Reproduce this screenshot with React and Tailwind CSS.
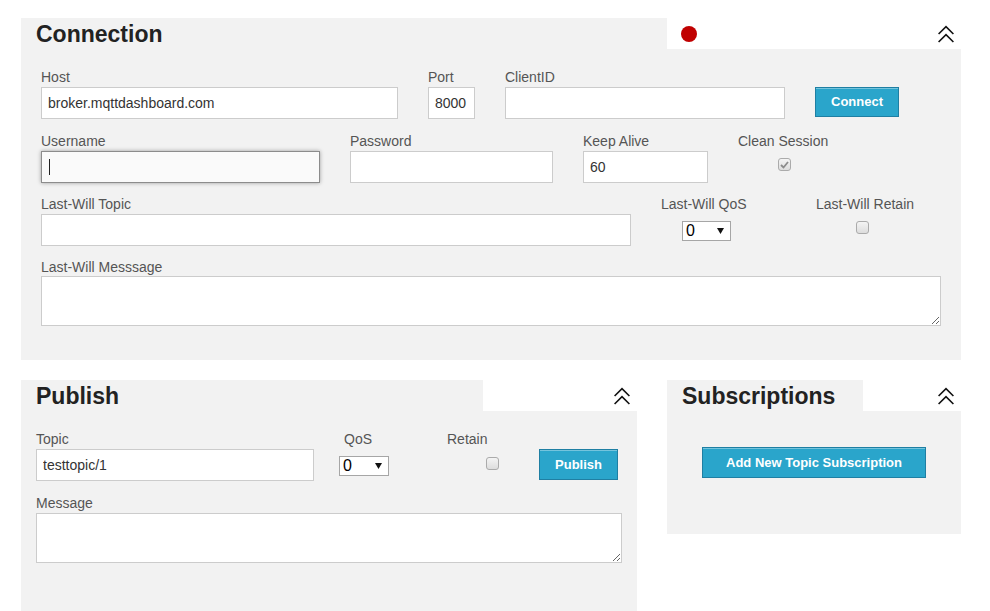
import React from "react";

// Double chevron used to collapse a panel
function Collapse() {
  return (
    <svg width="16" height="18" viewBox="0 0 16 18" fill="none" stroke="#111" strokeWidth="1.6">
      <polyline points="0.6,9 8,1.6 15.4,9" />
      <polyline points="0.6,17 8,9.6 15.4,17" />
    </svg>
  );
}

function Checkbox({ checked }) {
  return (
    <span className="flex h-[13px] w-[13px] items-center justify-center rounded-[3px] border border-[#ababab] bg-linear-to-b from-[#f4f4f4] to-[#dddddd]">
      {checked && (
        <svg width="9" height="8" viewBox="0 0 9 8" fill="none" stroke="#8c8c8c" strokeWidth="1.8">
          <polyline points="1,4 3.5,6.5 8,1" />
        </svg>
      )}
    </span>
  );
}

function Select({ width }) {
  return (
    <div
      className={`flex h-[20px] items-center justify-between border border-[#a6a6a6] bg-white pl-[3px] pr-[6px] text-[16px] leading-none text-black ${width}`}
    >
      <span>0</span>
      <svg width="7" height="6" viewBox="0 0 7 6">
        <polygon points="0,0 7,0 3.5,6" fill="#111" />
      </svg>
    </div>
  );
}

function Field({ label, width, value, focused }) {
  return (
    <div className={width}>
      <div className="h-[16px] leading-[16px]">{label}</div>
      {focused ? (
        <div className="mt-[2px] flex h-[32px] items-center border border-[#8c8c8c] bg-[#fafafa] px-[7px] shadow-[0_0_4px_rgba(0,0,0,0.35)]">
          <span className="h-[16px] w-px bg-[#222]" />
        </div>
      ) : (
        <input
          readOnly
          value={value || ""}
          className="mt-[2px] block h-[32px] w-full border border-[#cccccc] bg-white px-[6px] text-[14px] text-[#333] outline-none"
        />
      )}
    </div>
  );
}

function Header({ title, tabWidth, dot }) {
  return (
    <div className="flex h-[31px]">
      <div className="flex flex-1 items-center bg-[#f2f2f2] pl-[15px] pt-[2px]">
        <h2 className="text-[23px] font-bold leading-none text-[#222]">{title}</h2>
      </div>
      <div className={`flex items-center justify-between bg-white pl-[14px] pr-[7px] ${tabWidth}`}>
        {dot ? <span className="h-[16px] w-[16px] rounded-full bg-[#c00000]" /> : <span />}
        <Collapse />
      </div>
    </div>
  );
}

const buttonClass =
  "border border-[#1f7fa3] bg-[#2aa5cb] text-[13px] font-bold text-white shadow-[inset_0_1px_0_rgba(255,255,255,0.35)]";

export default function App() {
  return (
    <div className="h-[611px] overflow-hidden bg-white pl-[21px] pt-[18px] font-['Liberation_Sans',Arial,sans-serif] text-[14px] text-[#555]">
      {/* Connection */}
      <div className="w-[940px]">
        <Header title="Connection" tabWidth="w-[294px]" dot />
        <div className="bg-[#f2f2f2] pb-[34px] pl-[20px] pt-[20px]">
          <div className="flex items-start gap-[30px]">
            <Field label="Host" width="w-[357px]" value="broker.mqttdashboard.com" />
            <Field label="Port" width="w-[47px]" value="8000" />
            <Field label="ClientID" width="w-[280px]" />
            <button className={`mt-[18px] h-[30px] w-[84px] ${buttonClass}`}>Connect</button>
          </div>

          <div className="mt-[14px] flex items-start gap-[30px]">
            <Field label="Username" width="w-[279px]" focused />
            <Field label="Password" width="w-[203px]" />
            <Field label="Keep Alive" width="w-[125px]" value="60" />
            <div>
              <div className="h-[16px] leading-[16px]">Clean Session</div>
              <div className="ml-[40px] mt-[9px]">
                <Checkbox checked />
              </div>
            </div>
          </div>

          <div className="mt-[13px] flex items-start">
            <Field label="Last-Will Topic" width="w-[590px]" />
            <div className="ml-[30px] w-[155px]">
              <div className="h-[16px] leading-[16px]">Last-Will QoS</div>
              <div className="ml-[21px] mt-[9px]">
                <Select width="w-[49px]" />
              </div>
            </div>
            <div>
              <div className="h-[16px] leading-[16px]">Last-Will Retain</div>
              <div className="ml-[40px] mt-[9px]">
                <Checkbox />
              </div>
            </div>
          </div>

          <div className="mt-[13px] w-[900px]">
            <div className="h-[16px] leading-[16px]">Last-Will Messsage</div>
            <textarea
              readOnly
              className="mt-[1px] block h-[50px] w-full border border-[#cccccc] bg-white outline-none"
            />
          </div>
        </div>
      </div>

      <div className="mt-[20px] flex items-start gap-[30px]">
        {/* Publish */}
        <div className="flex h-[232px] w-[616px] flex-col">
          <Header title="Publish" tabWidth="w-[154px]" />
          <div className="flex-1 bg-[#f2f2f2] pl-[15px] pt-[20px]">
            <div className="flex items-start">
              <Field label="Topic" width="w-[278px]" value="testtopic/1" />
              <div className="ml-[25px] w-[108px]">
                <div className="ml-[5px] h-[16px] leading-[16px]">QoS</div>
                <div className="mt-[9px]">
                  <Select width="w-[50px]" />
                </div>
              </div>
              <div className="w-[92px]">
                <div className="h-[16px] leading-[16px]">Retain</div>
                <div className="ml-[39px] mt-[10px]">
                  <Checkbox />
                </div>
              </div>
              <button className={`mt-[18px] h-[31px] w-[79px] ${buttonClass}`}>Publish</button>
            </div>
            <div className="mt-[14px] w-[586px]">
              <div className="h-[16px] leading-[16px]">Message</div>
              <textarea
                readOnly
                className="mt-[2px] block h-[50px] w-full border border-[#cccccc] bg-white outline-none"
              />
            </div>
          </div>
        </div>

        {/* Subscriptions */}
        <div className="flex h-[154px] w-[294px] flex-col">
          <Header title="Subscriptions" tabWidth="w-[98px]" />
          <div className="flex flex-1 justify-center bg-[#f2f2f2] pt-[36px]">
            <button className={`h-[31px] w-[224px] ${buttonClass}`}>Add New Topic Subscription</button>
          </div>
        </div>
      </div>
    </div>
  );
}
